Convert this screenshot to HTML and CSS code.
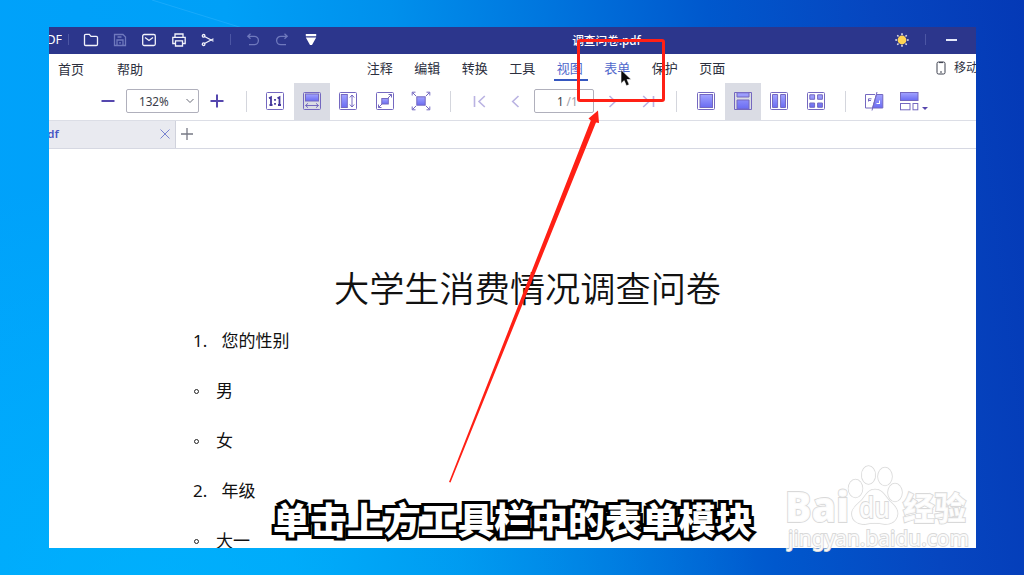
FILE: index.html
```html
<!DOCTYPE html>
<html lang="zh-CN">
<head>
    <meta charset="UTF-8">
    <title>调查问卷.pdf</title>
    <link rel="stylesheet" href="styles.css">
</head>
<body>
    <!-- shared gradient for the toolbar icons -->
    <svg class="defs" width="0" height="0">
        <defs>
            <linearGradient id="fill" x1="0" y1="0" x2="0" y2="1">
                <stop offset="0" stop-color="#a3a4ff"/>
                <stop offset="1" stop-color="#6a6cf2"/>
            </linearGradient>
        </defs>
    </svg>

    <svg class="ray" width="110" height="30" viewBox="0 0 110 30"><path d="M0 0 L97 30" stroke="#3bb8ff" stroke-opacity=".4"/></svg>

    <div class="window">
        <div class="titlebar">
            <span class="app-name">DF</span>
            <span class="bar-sep"></span>
            <div class="quick">
                <svg viewBox="0 0 16 16"><path d="M1.500 3.500 q0-1.200 1.200-1.200 h3.600 l1.700 2 h5.300 q1.200 0 1.200 1.200 v6.800 q0 1.200-1.200 1.200 h-10.600 q-1.200 0-1.200-1.200 z"/></svg>
                <svg class="off" viewBox="0 0 16 16"><path d="M2.500 2.500 h8.500 l2.500 2.500 v8.500 h-11 z M5 13.500 v-5.500 h6 v5.500 M5.500 5 h4 M7 10.800 h2"/></svg>
                <svg viewBox="0 0 16 16"><rect x="1.700" y="2.500" width="12.600" height="11" rx="1.500"/><path d="M4 5.500 l4 3 l4-3"/></svg>
                <svg viewBox="0 0 16 16"><path d="M4 5 V2 h8 v3 M4 11.500 H1.800 V5.300 h12.400 v6.200 H12 M4.500 8.800 h7 v5.200 h-7 z"/></svg>
                <svg viewBox="0 0 16 16"><path d="M4.500 4.500 L13.500 9.300 M4.500 11.500 L13.500 6.700"/><circle cx="3.600" cy="3.800" r="1.300"/><circle cx="3.600" cy="12.200" r="1.300"/></svg>
            </div>
            <span class="bar-sep"></span>
            <div class="quick history">
                <svg class="off" viewBox="0 0 16 16"><path d="M5.500 1.800 L2.800 4.300 L5.500 6.800 M3 4.300 h6.200 a4.200 4.200 0 0 1 0 8.400 H4"/></svg>
                <svg class="off" viewBox="0 0 16 16"><path d="M10.500 1.800 L13.200 4.300 L10.500 6.800 M13 4.300 h-6.200 a4.200 4.200 0 0 0 0 8.400 H12"/></svg>
                <svg class="solid" viewBox="0 0 16 16"><path d="M2.800 2 h10.400 v2.200 h-10.400 z M2.800 5.600 h10.400 L9 13 h-2 z"/></svg>
            </div>
            <span class="file-name">调查问卷.pdf</span>
            <svg class="sun" viewBox="0 0 16 16"><path d="M8 1.300 V3 M8 13 V14.700 M1.300 8 H3 M13 8 H14.700 M3.300 3.300 L4.500 4.500 M12.700 3.300 L11.500 4.500 M3.300 12.700 L4.500 11.500 M12.700 12.700 L11.500 11.500" stroke="#e9e5ee" stroke-width="1.500"/><circle cx="8" cy="8" r="4.400" fill="#ffd454"/></svg>
            <span class="bar-sep"></span>
            <span class="minimize"></span>
        </div>

        <div class="menu">
            <span class="home">首页</span>
            <span class="help">帮助</span>
            <div class="modules">
                <span>注释</span>
                <span>编辑</span>
                <span>转换</span>
                <span>工具</span>
                <span class="current">视图</span>
                <span class="hover">表单</span>
                <span>保护</span>
                <span>页面</span>
            </div>
            <div class="mobile">
                <svg width="10" height="14" viewBox="0 0 10 14"><rect x="1" y="1" width="8" height="12" rx="1.500"/><path d="M3 1.600 h4 M4 11 h2"/></svg>
                <span>移动</span>
            </div>
        </div>

        <div class="toolbar">
            <div class="tool"><svg viewBox="0 0 20 20" class="thick"><path d="M3.500 10 H16.500"/></svg></div>
            <div class="field zoom"><span>132%</span><svg viewBox="0 0 10 10"><path d="M1.500 3 L5 6.500 L8.500 3"/></svg></div>
            <div class="tool"><svg viewBox="0 0 20 20" class="thick"><path d="M3.500 10 H16.500 M10 3.500 V16.500"/></svg></div>
            <span class="sep"></span>

            <div class="tool view"><svg viewBox="0 0 20 20">
                <rect x="1.500" y="1.500" width="17" height="17" rx="1"/>
                <path class="dark" d="M4 7.300 L6 6.200 V14 M4.500 14 H7.500 M12.500 7.300 L14.500 6.200 V14 M13 14 H16 M10 8 v1.800 M10 12 v1.800"/>
            </svg></div>
            <div class="tool view active"><svg viewBox="0 0 20 20">
                <rect x="1.500" y="1.500" width="17" height="17" rx="1"/>
                <rect class="full" x="3.500" y="3" width="13" height="7"/>
                <path d="M3.500 14.500 H16.500 M6 12.300 L3.500 14.500 L6 16.700 M14 12.300 L16.500 14.500 L14 16.700"/>
            </svg></div>
            <div class="tool view"><svg viewBox="0 0 20 20">
                <rect x="1.500" y="1.500" width="17" height="17" rx="1"/>
                <rect class="full" x="3.300" y="3.500" width="6" height="13"/>
                <path d="M14 4 V16 M11.800 6.500 L14 4 L16.200 6.500 M11.800 13.500 L14 16 L16.200 13.500"/>
            </svg></div>
            <div class="tool view"><svg viewBox="0 0 20 20">
                <rect x="1.500" y="1.500" width="17" height="17" rx="1"/>
                <rect class="full" x="6.800" y="7.500" width="6.500" height="5.500"/>
                <path d="M13 7 L16.500 3.500 M13.500 3.500 H16.500 V6.500 M7 13 L3.500 16.500 M3.500 13.500 V16.500 H6.500"/>
            </svg></div>
            <div class="tool view"><svg viewBox="0 0 20 20">
                <rect class="full" x="5.800" y="5.800" width="8.400" height="8.400"/>
                <path d="M5 5 L1.500 1.500 M1.200 4.500 V1.200 H4.500 M15 5 L18.500 1.500 M15.500 1.200 H18.800 V4.500 M5 15 L1.500 18.500 M1.200 15.500 V18.800 H4.500 M15 15 L18.500 18.500 M15.500 18.800 H18.800 V15.500"/>
            </svg></div>
            <span class="sep"></span>

            <div class="tool nav"><svg viewBox="0 0 20 20"><path d="M4.500 5 V16 M14.800 5 L9 10.500 L14.800 16"/></svg></div>
            <div class="tool nav"><svg viewBox="0 0 20 20"><path d="M12.500 5 L6.700 10.500 L12.500 16"/></svg></div>
            <div class="field page"><span>1</span><span class="total">/1</span></div>
            <div class="tool nav"><svg viewBox="0 0 20 20"><path d="M7.500 5 L13.300 10.500 L7.500 16"/></svg></div>
            <div class="tool nav"><svg viewBox="0 0 20 20"><path d="M5.200 5 L11 10.500 L5.200 16 M15.500 5 V16"/></svg></div>
            <span class="sep"></span>

            <div class="tool view"><svg viewBox="0 0 20 20">
                <rect x="1.500" y="1.500" width="17" height="17" rx="1"/>
                <rect class="full" x="4" y="3.500" width="12.500" height="13"/>
            </svg></div>
            <div class="tool view active"><svg viewBox="0 0 20 20">
                <path d="M1.500 1.500 H18.500 V18.500 H1.500 Z"/>
                <path class="full" d="M4 1.800 H16 V6 H4 Z M4 9 H16 V18 H4 Z"/>
            </svg></div>
            <div class="tool view"><svg viewBox="0 0 20 20">
                <rect x="1.500" y="1.500" width="17" height="17" rx="1"/>
                <path class="full" d="M3.500 3.500 H8.600 V16.500 H3.500 Z M11.600 3.500 H16.500 V16.500 H11.600 Z"/>
            </svg></div>
            <div class="tool view"><svg viewBox="0 0 20 20">
                <rect x="1.500" y="1.500" width="17" height="17" rx="1"/>
                <path class="full" d="M3.800 3.800 H8.600 V8.300 H3.800 Z M11.600 3.800 H16.400 V8.300 H11.600 Z M3.800 12 H8.600 V16.300 H3.800 Z M11.600 12 H16.400 V16.300 H11.600 Z"/>
            </svg></div>
            <span class="sep"></span>

            <div class="tool"><svg viewBox="0 0 20 20">
                <path d="M11 3.500 H1.500 V17 H8 M4.500 10.500 V7.800 H7.500 M5 9.500 H7"/>
                <path class="full" d="M12.500 3.500 H18.800 V17 H8.500 Z"/>
                <path d="M13 1 L8 19.500"/>
                <path class="light" d="M15.500 9.500 v2.800 M12.500 12.500 h3.500"/>
            </svg></div>
            <div class="tool split">
                <svg viewBox="0 0 20 20">
                    <rect class="full" x="1.500" y="1.500" width="17.500" height="8"/>
                    <rect x="1.500" y="12.500" width="9.500" height="6.300"/>
                    <rect x="14" y="12.500" width="4.800" height="6.300"/>
                </svg>
                <span class="caret"></span>
            </div>
        </div>

        <div class="tabs">
            <div class="tab">
                <span>pdf</span>
                <svg viewBox="0 0 12 12"><path d="M1.500 1.500 L10.500 10.500 M10.500 1.500 L1.500 10.500"/></svg>
            </div>
            <svg class="new-tab" viewBox="0 0 14 14"><path d="M1 7 H13 M7 1 V13"/></svg>
        </div>

        <div class="document">
            <h1>大学生消费情况调查问卷</h1>
            <div class="question"><span class="num">1.</span>您的性别</div>
            <div class="option"><i></i>男</div>
            <div class="option"><i></i>女</div>
            <div class="question"><span class="num">2.</span>年级</div>
            <div class="option"><i></i>大一</div>
        </div>
    </div>

    <svg class="pointer" width="12" height="18" viewBox="0 0 12 18"><path d="M1 .8 V14.500 L4.200 11.600 L6.400 16.800 L9.200 15.600 L7 10.500 H11.200 Z"/></svg>

    <div class="highlight"></div>
    <svg class="arrow" width="160" height="380" viewBox="0 0 160 380"><path d="M5.500 376.500 L4 376 L145.800 14.500 L143.500 12.500 L153 4.500 L154 17 L151 16.500 Z"/></svg>

    <div class="caption">单击上方工具栏中的表单模块</div>

    <svg class="watermark" width="200" height="100" viewBox="0 0 200 100">
        <text class="brand" x="5" y="62" textLength="64" lengthAdjust="spacingAndGlyphs">Bai</text>
        <g class="paw">
            <ellipse cx="75.500" cy="28.500" rx="7" ry="9"/>
            <ellipse cx="88.500" cy="15" rx="6.800" ry="9"/>
            <ellipse cx="105" cy="16.500" rx="7" ry="9"/>
            <ellipse cx="115" cy="32.500" rx="7" ry="9"/>
            <path d="M95 29.500 c8 0 10 7 15 12 c6 5 8 9 7.500 13 c-1 7-7 10-13 9.500 c-7-1.500-13-1.500-19 0 c-8 1-14-4-13.500-11 c.5-6 6-9 10-13 c4-5 6-10.500 13-10.500 z"/>
        </g>
        <text class="du" x="79" y="58" textLength="31" lengthAdjust="spacingAndGlyphs">du</text>
        <text class="cn" x="123" y="60" textLength="63">经验</text>
        <text class="url" x="8" y="86" textLength="181" lengthAdjust="spacingAndGlyphs">jingyan.baidu.com</text>
    </svg>
</body>
</html>
```

FILE: styles.css
```css
* {
    box-sizing: border-box;
}

body {
    margin: 0;
    height: 575px;
    padding: 27px 48px 27px 49px;
    overflow: hidden;
    position: relative;
    font-family: "Noto Sans", "Noto Sans CJK SC", sans-serif;
    background:
        radial-gradient(600px 420px at 160px 600px, rgba(0, 190, 255, 0.5), rgba(0, 190, 255, 0)),
        linear-gradient(83deg, #00a2fb 0%, #00a0f7 27%, #0090ec 42%, #0076de 56%, #0058cd 71%, #0646c0 86%, #0439b6 100%);
}

.defs {
    position: absolute;
}

.ray {
    position: absolute;
    left: 152px;
    top: 0;
}

svg {
    display: block;
    flex: none;
    fill: none;
}

.window {
    height: 521px;
    background: #fff;
    overflow: hidden;
    position: relative;
}

/* title bar */
.titlebar {
    height: 27px;
    display: flex;
    align-items: center;
    background: #2c368c;
    color: #fff;
    padding-bottom: 2px;
}

.app-name {
    width: 13px;
    margin-right: 6px;
    display: flex;
    justify-content: flex-end;
    overflow: hidden;
    font-size: 12.500px;
    line-height: 18px;
}

.bar-sep {
    width: 1px;
    height: 11px;
    background: #4c56a4;
}

.quick {
    display: flex;
    gap: 13.200px;
    margin-left: 14px;
    margin-right: 14px;
}

.quick svg {
    width: 16px;
    height: 16px;
    stroke: #f2f3fb;
    stroke-width: 1.300;
}

.quick .off {
    stroke: #6f79bd;
}

.quick .solid {
    fill: #fff;
    stroke: none;
}

.history {
    margin-left: 14px;
    margin-right: 0;
}

.file-name {
    margin-left: 253px;
    margin-right: 252px;
    width: 70px;
    font-size: 11.700px;
    font-weight: 500;
    line-height: 20px;
    white-space: nowrap;
}

.sun {
    width: 16px;
    height: 16px;
    margin-right: 15px;
}

.minimize {
    width: 11px;
    height: 2px;
    margin-left: 20px;
    background: #e4e8fa;
}

/* menu */
.menu {
    height: 29px;
    display: flex;
    align-items: center;
    font-size: 13px;
    line-height: 20px;
    color: #2c2f3e;
    white-space: nowrap;
}

.home {
    margin-left: 9px;
}

.help {
    margin-left: 33px;
}

.modules {
    display: flex;
    height: 29px;
    margin-left: 213px;
}

.modules span {
    width: 47.500px;
    line-height: 29px;
    text-align: center;
}

.modules .current {
    color: #5068cc;
    display: flex;
    flex-direction: column;
    align-items: center;
}

.modules .current::after {
    content: "";
    width: 34px;
    height: 2px;
    margin-top: -4px;
    margin-left: 2px;
    background: #3557c0;
}

.modules .hover {
    color: #5068cc;
}

.mobile {
    display: flex;
    align-items: center;
    gap: 8px;
    width: 40px;
    margin-left: auto;
    padding-bottom: 1px;
    overflow: hidden;
    font-size: 12px;
}

.mobile svg {
    stroke: #3b3e4c;
}

/* toolbar */
.toolbar {
    height: 38px;
    display: flex;
    align-items: center;
    padding-left: 41px;
    border-bottom: 1px solid #dcdee6;
}

.tool {
    width: 36px;
    height: 37px;
    display: flex;
    align-items: center;
    justify-content: center;
}

.tool svg {
    width: 20px;
    height: 20px;
    margin-top: -1px;
    stroke: #7468c0;
}

.tool .thick {
    stroke: #5547ae;
    stroke-width: 2;
}

.tool .dark {
    stroke: #43369c;
    stroke-width: 1.800;
}

.tool .full {
    fill: url(#fill);
}

.tool .light {
    stroke: #fff;
}

.view {
    width: 36.500px;
}

.active {
    background: #dadce4;
}

.tool.nav svg {
    stroke: #bab3e2;
    stroke-width: 1.600;
}

.sep {
    width: 1px;
    height: 21px;
    margin: 0 10.600px;
    background: #d4d6dd;
}

.field {
    height: 24px;
    display: flex;
    align-items: center;
    margin-bottom: 1px;
    border: 1px solid #b0b0bc;
    border-radius: 2px;
    color: #3b3d49;
    font-size: 11.700px;
}

.zoom {
    width: 73px;
    padding: 0 3px 0 12px;
    justify-content: space-between;
}

.zoom svg {
    width: 10px;
    height: 10px;
    stroke: #696b78;
}

.page {
    width: 60px;
    padding-left: 22px;
    gap: 3px;
}

.total {
    color: #a0a1aa;
}

.split {
    width: 38px;
    justify-content: flex-start;
    padding-left: 7px;
}

.caret {
    margin: 13px 0 0 3px;
    border: 3.500px solid transparent;
    border-top-color: #5746ae;
    border-bottom: 0;
}

/* file tabs */
.tabs {
    height: 28px;
    display: flex;
    align-items: center;
    border-bottom: 1px solid #d6d8e2;
}

.tab {
    width: 127px;
    height: 27px;
    display: flex;
    align-items: center;
    justify-content: space-between;
    padding-right: 4px;
    overflow: hidden;
    background: #e9eaf0;
    border-right: 1px solid #d0d2dc;
    color: #4655c4;
    font-size: 11.500px;
    font-weight: 600;
}

.tab span {
    margin-left: -9px;
    margin-top: -2px;
}

.tab svg {
    width: 12px;
    height: 12px;
    margin-top: -1px;
    stroke: #7883d0;
}

.new-tab {
    width: 14px;
    height: 14px;
    margin: -1px 0 0 4px;
    stroke: #777985;
    stroke-width: 1.300;
}

/* document */
.document {
    color: #111;
    padding-left: 144px;
    font-size: 17px;
}

.document h1 {
    margin: 110px 0 25px 141px;
    font-size: 35.200px;
    line-height: 56px;
    font-weight: 350;
    font-family: "Noto Sans CJK SC", sans-serif;
    white-space: nowrap;
}

.question,
.option {
    height: 50px;
    line-height: 50px;
    display: flex;
    align-items: center;
}

.document h1 + .question {
    margin-top: -24px;
}

.num {
    width: 28.500px;
}

.option i {
    width: 5px;
    height: 5px;
    margin: 0 17px 0 1px;
    border: 1px solid #222;
    border-radius: 50%;
}

/* things drawn over the window */
.pointer {
    position: absolute;
    left: 620px;
    top: 69px;
    fill: #0a0a0a;
    stroke: #fff;
    stroke-width: .6;
}

.highlight {
    position: absolute;
    left: 577px;
    top: 39px;
    width: 88px;
    height: 63px;
    border: 3px solid #ff2015;
    border-radius: 3px;
}

.arrow {
    position: absolute;
    left: 445px;
    top: 106px;
    fill: #ff2015;
}

.caption {
    position: absolute;
    left: 273px;
    top: 491px;
    font-family: "Noto Sans CJK SC", sans-serif;
    font-size: 36.900px;
    line-height: 54px;
    font-weight: 900;
    white-space: nowrap;
    color: #fff;
    -webkit-text-stroke: 6px #000;
    paint-order: stroke fill;
    text-shadow: 2px 2px 2px rgba(0, 0, 0, 0.5);
}

.watermark {
    position: absolute;
    left: 780px;
    top: 460px;
    fill: rgba(255, 255, 255, 0.9);
    stroke: #d9d9d9;
    stroke-width: 1.800;
    paint-order: stroke fill;
}

.paw {
    stroke-width: 1.500;
}

.brand {
    font: 800 42px "Open Sans", sans-serif;
}

.du {
    font: 600 28px "Open Sans", sans-serif;
}

.cn {
    font: 900 31.500px "Noto Sans CJK SC", sans-serif;
}

.url {
    font: 400 21px "Noto Sans", sans-serif;
}
```
